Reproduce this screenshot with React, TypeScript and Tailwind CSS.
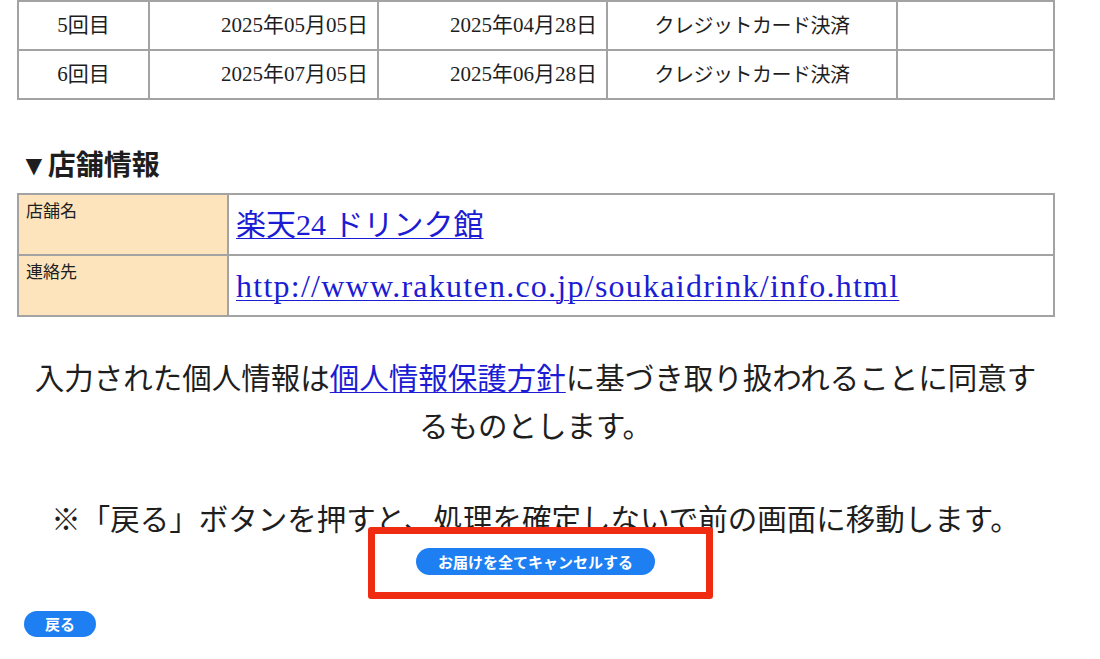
import React from "react";

const serif = { fontFamily: '"Liberation Serif", "Noto Sans CJK JP", serif' };
const sans = { fontFamily: '"Noto Sans CJK JP", "Noto Sans", sans-serif' };

const rows = [
  ["5回目", "2025年05月05日", "2025年04月28日", "クレジットカード決済", ""],
  ["6回目", "2025年07月05日", "2025年06月28日", "クレジットカード決済", ""],
];

export default function App() {
  return (
    <div className="min-h-[659px] w-[1100px] bg-white text-[#1e1e1e]" style={serif}>
      <div className="ml-[17px] w-[1037px]">
        <table className="w-[1036px] table-fixed border-collapse text-[20px]">
          <colgroup>
            <col className="w-[131px]" />
            <col className="w-[229px]" />
            <col className="w-[229px]" />
            <col className="w-[290px]" />
            <col className="w-[157px]" />
          </colgroup>
          <tbody>
            {rows.map((r) => (
              <tr key={r[0]} className="h-[49px]">
                <td className="border-2 border-[#a3a3a3] text-center align-middle text-[21px]">{r[0]}</td>
                <td className="border-2 border-[#a3a3a3] pr-[9px] text-right align-middle text-[21px]">{r[1]}</td>
                <td className="border-2 border-[#a3a3a3] pr-[9px] text-right align-middle text-[21px]">{r[2]}</td>
                <td className="border-2 border-[#a3a3a3] text-center align-middle tracking-[-0.5px]">{r[3]}</td>
                <td className="border-2 border-[#a3a3a3]">{r[4]}</td>
              </tr>
            ))}
          </tbody>
        </table>

        <h2 className="mt-[48px] mb-[9px] pl-[3px] text-[28px] font-bold leading-[36px]">▼店舗情報</h2>

        <table className="w-[1036px] table-fixed border-collapse">
          <colgroup>
            <col className="w-[210px]" />
            <col className="w-[826px]" />
          </colgroup>
          <tbody>
            <tr className="h-[61px]">
              <td className="border-2 border-[#a3a3a3] bg-[#fde4bd] pl-[7px] pt-[6px] align-top text-[17px] leading-[22px]">
                店舗名
              </td>
              <td className="border-2 border-[#a3a3a3] pl-[7px] align-middle text-[30px] leading-[36px]">
                <a href="#" className="text-[#1c1cd4] underline decoration-1 underline-offset-[3px]">
                  楽天24 ドリンク館
                </a>
              </td>
            </tr>
            <tr className="h-[61px]">
              <td className="border-2 border-[#a3a3a3] bg-[#fde4bd] pl-[7px] pt-[6px] align-top text-[17px] leading-[22px]">
                連絡先
              </td>
              <td className="border-2 border-[#a3a3a3] pl-[7px] align-middle text-[32px] leading-[36px] tracking-[1.25px]">
                <a href="#" className="text-[#1c1cd4] underline decoration-1 underline-offset-[3px]">
                  http://www.rakuten.co.jp/soukaidrink/info.html
                </a>
              </td>
            </tr>
          </tbody>
        </table>

        <p className="mt-[38px] px-[10px] text-center text-[29.5px] leading-[48px]">
          入力された個人情報は
          <a href="#" className="text-[#1c1cd4] underline decoration-1 underline-offset-[3px]">
            個人情報保護方針
          </a>
          に基づき取り扱われることに同意するものとします。
        </p>

        <p className="mt-[45px] text-center text-[29.5px] leading-[48px]">
          ※「戻る」ボタンを押すと、処理を確定しないで前の画面に移動します。
        </p>

        <div className="mt-[4px] flex justify-center" style={sans}>
          <div className="relative">
            <div className="absolute -top-[21px] -bottom-[24px] -left-[48px] -right-[58px] rounded-[3px] border-[7px] border-[#ef2b12] bg-white" />
            <button className="relative h-[27px] rounded-full bg-[#1d7ff2] px-[22px] text-[15px] font-bold leading-[27px] text-white">
              お届けを全てキャンセルする
            </button>
          </div>
        </div>

        <div className="mt-[36px] pl-[7px]" style={sans}>
          <button className="h-[26px] rounded-full bg-[#1d7ff2] px-[21px] text-[15px] font-bold leading-[26px] text-white">
            戻る
          </button>
        </div>
      </div>
    </div>
  );
}
